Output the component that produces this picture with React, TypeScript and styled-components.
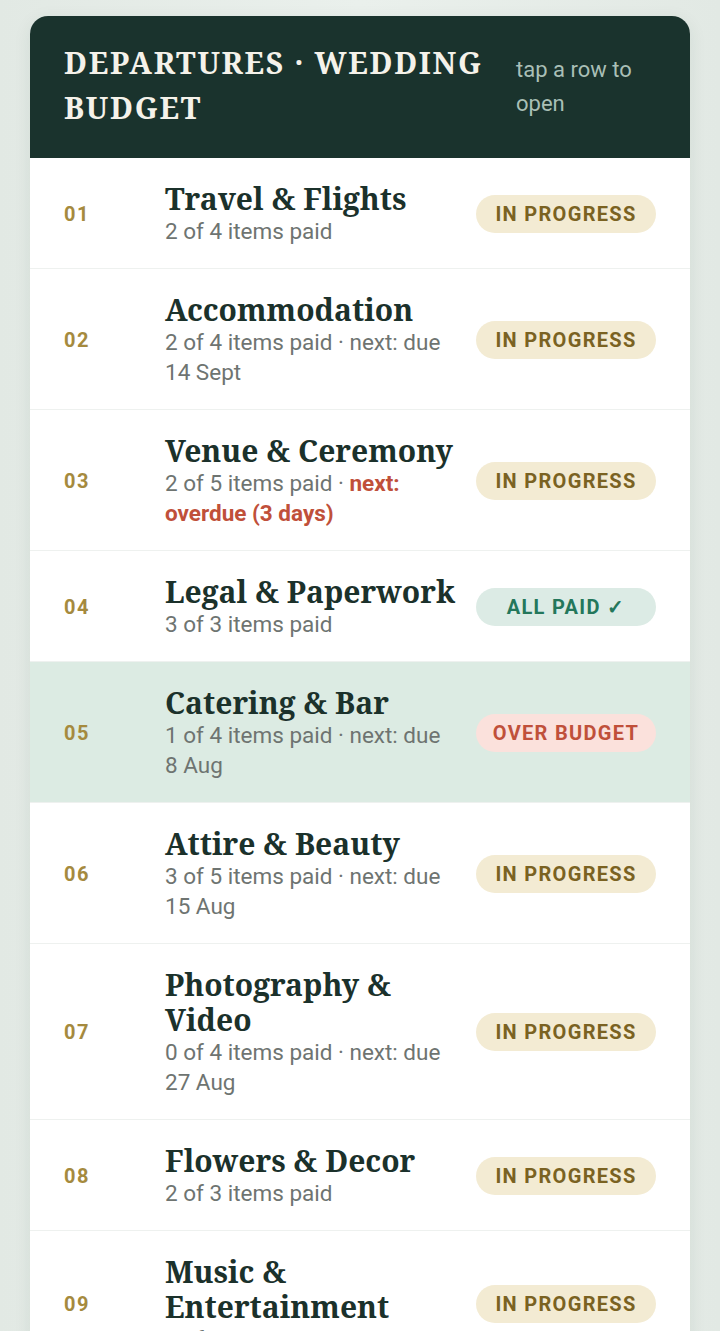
import React from "react";
import styled, { createGlobalStyle } from "styled-components";

const Global = createGlobalStyle`
  html, body { margin: 0; padding: 0; }
  body {
    background: linear-gradient(90deg, #e2e9e4 0%, #eaf0ec 50%, #e2e9e4 100%);
    font-family: Roboto, "Liberation Sans", sans-serif;
  }
`;

const Page = styled.div`
  padding: 16px 30px 0;
  min-height: 1331px;
  box-sizing: border-box;
`;

const Card = styled.div`
  background: #ffffff;
  border-radius: 18px 18px 0 0;
  overflow: hidden;
  box-shadow: 0 4px 18px rgba(30, 60, 50, 0.08);
`;

const Header = styled.header`
  background: #1a332d;
  display: flex;
  align-items: center;
  justify-content: space-between;
  gap: 26px;
  padding: 24px 34px 28px;
  height: 142px;
  box-sizing: border-box;
`;

const Title = styled.h1`
  margin: 0;
  flex: 1;
  font-family: "Noto Serif", "DejaVu Serif", serif;
  font-weight: 700;
  font-size: 30px;
  line-height: 45px;
  letter-spacing: 1.7px;
  color: #f5f2ea;
  text-transform: uppercase;
`;

const Hint = styled.div`
  width: 140px;
  font-size: 22px;
  line-height: 34px;
  color: #a9bfb6;
  margin-top: 4px;
`;

const Row = styled.div<{ $active?: boolean }>`
  display: grid;
  grid-template-columns: 81px 1fr 180px;
  column-gap: 20px;
  align-items: center;
  padding: 23px 34px 22px;
  border-bottom: 1px solid #eef1ef;
  background: ${(p) => (p.$active ? "#dcebe3" : "#ffffff")};
`;

const Num = styled.div`
  font-size: 20px;
  font-weight: 700;
  letter-spacing: 1.6px;
  color: #a58a3e;
`;

const Info = styled.div`
  display: flex;
  flex-direction: column;
`;

const Name = styled.div`
  font-family: "Noto Serif", "DejaVu Serif", serif;
  font-weight: 700;
  font-size: 30px;
  line-height: 35px;
  color: #1b312b;
`;

const Sub = styled.div`
  font-size: 22.5px;
  line-height: 30px;
  color: #6e7471;
`;

const Overdue = styled.span`
  color: #c0503a;
  font-weight: 700;
`;

type Tone = "progress" | "paid" | "over";

const tones: Record<Tone, { bg: string; fg: string }> = {
  progress: { bg: "#f3ebd3", fg: "#7a6222" },
  paid: { bg: "#dcebe5", fg: "#24775b" },
  over: { bg: "#fbe1dc", fg: "#c0503a" },
};

const Badge = styled.div<{ $tone: Tone }>`
  height: 38px;
  border-radius: 19px;
  display: flex;
  align-items: center;
  justify-content: center;
  font-size: 20px;
  font-weight: 700;
  letter-spacing: 1.3px;
  background: ${(p) => tones[p.$tone].bg};
  color: ${(p) => tones[p.$tone].fg};
`;

type Item = {
  n: string;
  name: string;
  sub: React.ReactNode;
  tone: Tone;
  label: string;
  active?: boolean;
};

const items: Item[] = [
  { n: "01", name: "Travel & Flights", sub: "2 of 4 items paid", tone: "progress", label: "IN PROGRESS" },
  { n: "02", name: "Accommodation", sub: "2 of 4 items paid · next: due 14 Sept", tone: "progress", label: "IN PROGRESS" },
  {
    n: "03",
    name: "Venue & Ceremony",
    sub: (
      <>
        2 of 5 items paid · <Overdue>next: overdue (3 days)</Overdue>
      </>
    ),
    tone: "progress",
    label: "IN PROGRESS",
  },
  { n: "04", name: "Legal & Paperwork", sub: "3 of 3 items paid", tone: "paid", label: "ALL PAID ✓" },
  { n: "05", name: "Catering & Bar", sub: "1 of 4 items paid · next: due 8 Aug", tone: "over", label: "OVER BUDGET", active: true },
  { n: "06", name: "Attire & Beauty", sub: "3 of 5 items paid · next: due 15 Aug", tone: "progress", label: "IN PROGRESS" },
  { n: "07", name: "Photography & Video", sub: "0 of 4 items paid · next: due 27 Aug", tone: "progress", label: "IN PROGRESS" },
  { n: "08", name: "Flowers & Decor", sub: "2 of 3 items paid", tone: "progress", label: "IN PROGRESS" },
  { n: "09", name: "Music & Entertainment", sub: "2 of 3 items paid", tone: "progress", label: "IN PROGRESS" },
];

export default function App() {
  return (
    <>
      <Global />
      <Page>
        <Card>
          <Header>
            <Title>Departures · Wedding Budget</Title>
            <Hint>tap a row to open</Hint>
          </Header>
          {items.map((it) => (
            <Row key={it.n} $active={it.active}>
              <Num>{it.n}</Num>
              <Info>
                <Name>{it.name}</Name>
                <Sub>{it.sub}</Sub>
              </Info>
              <Badge $tone={it.tone}>{it.label}</Badge>
            </Row>
          ))}
        </Card>
      </Page>
    </>
  );
}
